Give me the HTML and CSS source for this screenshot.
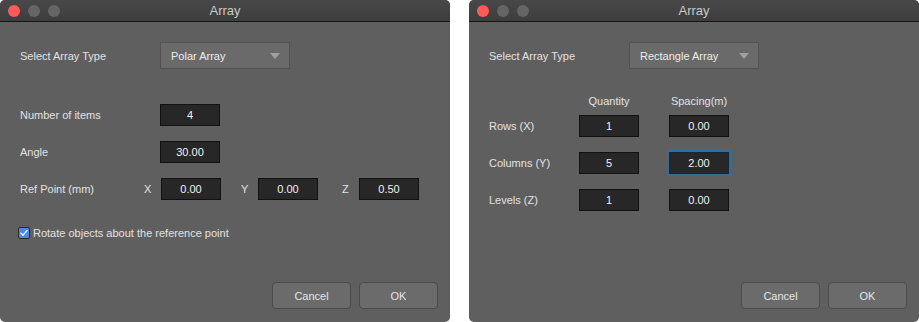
FILE: index.html
```html
<!DOCTYPE html>
<html lang="en">
<head>
  <meta charset="UTF-8" />
  <title>Array</title>
  <link rel="stylesheet" href="styles.css">
</head>
<body>
  <div class="dialog">
    <div class="titlebar">
      <div class="lights">
        <span class="light red"></span>
        <span class="light"></span>
        <span class="light"></span>
      </div>
      <div class="title">Array</div>
    </div>
    <div class="content">
      <div class="row row-select">
        <label class="label">Select Array Type</label>
        <div class="select">Polar Array<span class="caret"></span></div>
      </div>

      <div class="row row-first">
        <label class="label">Number of items</label>
        <input class="field" type="text" value="4">
      </div>
      <div class="row">
        <label class="label">Angle</label>
        <input class="field" type="text" value="30.00">
      </div>
      <div class="row">
        <label class="label label-short">Ref Point (mm)</label>
        <div class="axis">
          <span class="axis-name">X</span>
          <input class="field" type="text" value="0.00">
        </div>
        <div class="axis axis-y">
          <span class="axis-name">Y</span>
          <input class="field" type="text" value="0.00">
        </div>
        <div class="axis axis-z">
          <span class="axis-name">Z</span>
          <input class="field" type="text" value="0.50">
        </div>
      </div>

      <div class="check-row">
        <span class="checkbox">
          <svg width="10" height="10" viewBox="0 0 10 10"><path d="M2 5.2 L4 7.2 L8 2.6" fill="none" stroke="#fff" stroke-width="1.3" stroke-linecap="round" stroke-linejoin="round"/></svg>
        </span>
        <span class="check-label">Rotate objects about the reference point</span>
      </div>
    </div>
    <div class="footer">
      <button class="btn" type="button">Cancel</button>
      <button class="btn" type="button">OK</button>
    </div>
  </div>

  <div class="dialog">
    <div class="titlebar">
      <div class="lights">
        <span class="light red"></span>
        <span class="light"></span>
        <span class="light"></span>
      </div>
      <div class="title">Array</div>
    </div>
    <div class="content">
      <div class="row row-select">
        <label class="label">Select Array Type</label>
        <div class="select">Rectangle Array<span class="caret"></span></div>
      </div>

      <div class="grid-head">
        <span class="head">Quantity</span>
        <span class="head">Spacing(m)</span>
      </div>
      <div class="grid-row grid-row-first">
        <label class="label label-grid">Rows (X)</label>
        <input class="field" type="text" value="1">
        <input class="field" type="text" value="0.00">
      </div>
      <div class="grid-row">
        <label class="label label-grid">Columns (Y)</label>
        <input class="field" type="text" value="5">
        <input class="field focused" type="text" value="2.00">
      </div>
      <div class="grid-row">
        <label class="label label-grid">Levels (Z)</label>
        <input class="field" type="text" value="1">
        <input class="field" type="text" value="0.00">
      </div>
    </div>
    <div class="footer">
      <button class="btn" type="button">Cancel</button>
      <button class="btn" type="button">OK</button>
    </div>
  </div>
</body>
</html>
```

FILE: styles.css
```css
body {
  font-family: "Liberation Sans", Arial, sans-serif;
  font-size: 11px;
  background-color: #fff;
  margin: 0;
  padding: 0;
  display: flex;
  gap: 19px;
}

.dialog {
  width: 450px;
  height: 322px;
  background-color: #5f5f5f;
  border-radius: 5px;
  overflow: hidden;
  display: flex;
  flex-direction: column;
  color: #e2e2e2;
}

.titlebar {
  height: 21px;
  background: linear-gradient(#484848, #3d3d3d);
  border-bottom: 1px solid #161616;
  display: grid;
  grid-template-columns: 1fr auto 1fr;
  align-items: center;
}

.lights {
  display: flex;
  gap: 8px;
  padding-left: 8px;
}

.light {
  width: 12px;
  height: 12px;
  border-radius: 50%;
  background-color: #656565;
}

.light.red {
  background-color: #fc5b57;
}

.title {
  font-size: 13px;
  color: #c9c9c9;
}

.content {
  padding: 20px 20px 0;
}

.row {
  display: flex;
  align-items: center;
  height: 22px;
  margin-top: 15px;
}

.row-select {
  height: 27px;
  margin-top: 0;
}

.row-first {
  margin-top: 35px;
}

.label {
  width: 140px;
  flex-shrink: 0;
  white-space: nowrap;
}

.label-short {
  width: 124px;
}

.select {
  width: 130px;
  height: 27px;
  box-sizing: border-box;
  background-color: #6a6a6a;
  border: 1px solid #525252;
  display: flex;
  align-items: center;
  justify-content: space-between;
  padding: 0 9px 0 10px;
  font-size: 11px;
  color: #ececec;
}

.caret {
  width: 0;
  height: 0;
  border-left: 5px solid transparent;
  border-right: 5px solid transparent;
  border-top: 6px solid #a0a0a0;
}

.field {
  width: 60px;
  height: 22px;
  box-sizing: border-box;
  background-color: #272727;
  border: 1px solid #111;
  color: #f2f2f2;
  font-family: inherit;
  font-size: 11px;
  text-align: center;
  padding: 0;
  margin: 0;
  outline: none;
}

.field.focused {
  border-color: #13283a;
  box-shadow: 0 0 0 2px #356d97;
}

.axis {
  display: flex;
  align-items: center;
}

.axis-name {
  width: 17px;
}

.axis-y {
  margin-left: 20px;
}

.axis-z {
  margin-left: 24px;
}

.check-row {
  display: flex;
  align-items: center;
  margin-top: 27px;
  margin-left: -2px;
  gap: 3px;
}

.checkbox {
  width: 12px;
  height: 12px;
  box-sizing: border-box;
  border: 1px solid #2a2a2a;
  border-radius: 2px;
  background-color: #4f86e2;
  display: flex;
  align-items: center;
  justify-content: center;
}

.grid-head {
  display: flex;
  gap: 30px;
  margin-top: 25px;
  padding-left: 90px;
  height: 13px;
  align-items: center;
}

.head {
  width: 60px;
  text-align: center;
  white-space: nowrap;
}

.grid-row {
  display: flex;
  align-items: center;
  height: 22px;
  margin-top: 15px;
}

.grid-row .field + .field {
  margin-left: 30px;
}

.grid-row-first {
  margin-top: 8px;
}

.label-grid {
  width: 90px;
}

.footer {
  margin-top: auto;
  display: flex;
  justify-content: flex-end;
  gap: 8px;
  padding: 0 12px 13px 0;
}

.btn {
  width: 79px;
  height: 27px;
  background-color: #6b6b6b;
  border: 1px solid #4b4b4b;
  border-radius: 4px;
  color: #e6e6e6;
  font-family: inherit;
  font-size: 11px;
  padding: 0;
  cursor: pointer;
}
```
